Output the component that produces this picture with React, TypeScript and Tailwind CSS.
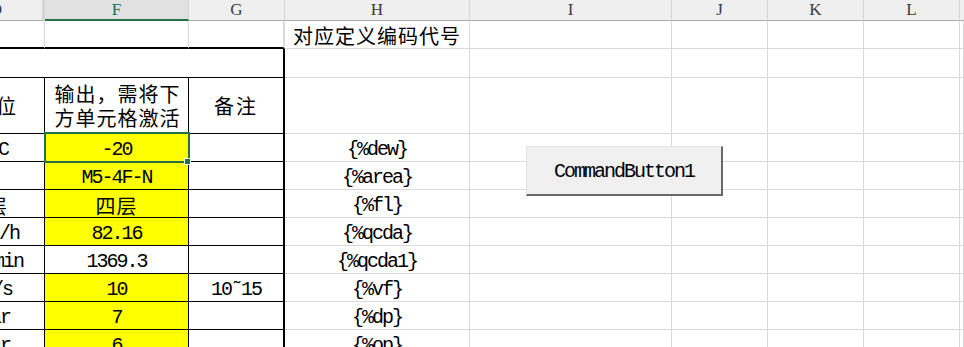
import React from 'react';

// 列幅（右罫線込み）
const W = ['w-[45px]', 'w-[144px]', 'w-[96px]', 'w-[185px]', 'w-[202px]', 'w-[96px]', 'w-[96px]', 'w-[96px]'];

const MONO = "font-['Liberation_Mono',monospace] text-[20px] tracking-[-2px]";
const CJK = "font-['Noto_Sans_CJK_SC',sans-serif] text-[20px] tracking-[1px]";

interface DataRow {
  e: string;
  eClass: string;
  f: string;
  fCjk?: boolean;
  yellow: boolean;
  g?: string;
  h: string;
}

const rows: DataRow[] = [
  { e: '°C', eClass: `mr-[36px] ${MONO}`, f: '-20', yellow: true, h: '{%dew}' },
  { e: '', eClass: '', f: 'M5-4F-N', yellow: true, h: '{%area}' },
  { e: '楼层', eClass: `mr-[36px] ${CJK}`, f: '四层', fCjk: true, yellow: true, h: '{%fl}' },
  { e: 'm³/h', eClass: `mr-[25px] ${MONO}`, f: '82.16', yellow: true, h: '{%qcda}' },
  { e: 'm³/min', eClass: `mr-[21px] ${MONO}`, f: '1369.3', yellow: false, h: '{%qcda1}' },
  { e: 'm/s', eClass: `mr-[32px] ${MONO}`, f: '10', yellow: true, g: '10˜15', h: '{%vf}' },
  { e: 'bar', eClass: `mr-[34px] ${MONO}`, f: '7', yellow: true, h: '{%dp}' },
  { e: 'bar', eClass: `mr-[34px] ${MONO}`, f: '6', yellow: true, h: '{%op}' },
];

const grid = 'shrink-0 h-full border-r border-b border-[#dadada]';

const GrayCells: React.FC<{ from: number; children?: React.ReactNode }> = ({ from, children }) => (
  <>
    {W.slice(from).map((w, i) => (
      <div key={w + i} className={`${grid} ${w} flex items-center justify-center pt-[4px]`}>
        {i === 0 ? children : null}
      </div>
    ))}
    <div className={`${grid} flex-1`} />
  </>
);

export default function App() {
  const headers = ['D', 'F', 'G', 'H', 'I', 'J', 'K', 'L'];

  return (
    <div className="relative w-[964px] h-[347px] overflow-hidden bg-white text-black">
      {/* 列見出し */}
      <div className="flex h-[21px] font-['Liberation_Serif',serif] text-[17px] text-[#3a3a3a]">
        {headers.map((h, i) =>
          i === 0 ? (
            <div key={h} className={`${W[0]} shrink-0 flex justify-end overflow-hidden bg-[#efefef] border-b border-[#ababab] border-r-[3px] border-r-[#d4d4d4]`}>
              <span className="mr-[40px] leading-[20px]">{h}</span>
            </div>
          ) : i === 1 ? (
            <div key={h} className={`${W[1]} shrink-0 flex justify-center bg-[#e1e1e1] border-b-2 border-[#217346] border-r border-r-[#d4d4d4] text-[#217346] leading-[20px]`}>
              {h}
            </div>
          ) : (
            <div key={h} className={`${W[i]} shrink-0 flex justify-center bg-[#efefef] border-b border-[#ababab] border-r border-r-[#d4d4d4] leading-[20px]`}>
              {h}
            </div>
          )
        )}
        <div className="flex-1 bg-[#efefef] border-b border-[#ababab]" />
      </div>

      {/* 1行目 */}
      <div className="flex h-[28px]">
        <div className={`${W[0]} shrink-0 h-full border-r border-[#dadada] border-b-2 border-b-black`} />
        <div className={`${W[1]} shrink-0 h-full border-r border-[#dadada] border-b-2 border-b-black`} />
        <div className={`${W[2]} shrink-0 h-full border-r-2 border-[#dadada] border-b-2 border-b-black`} />
        <div className={`${grid} ${W[3]} flex items-center justify-center pt-[2px] ${CJK} tracking-[1.5px]`}>
          对应定义编码代号
        </div>
        {W.slice(4).map((w, i) => (
          <div key={i} className={`${grid} ${w}`} />
        ))}
        <div className={`${grid} flex-1`} />
      </div>

      {/* 2行目（結合） */}
      <div className="flex h-[29px]">
        <div className="w-[285px] shrink-0 h-full border-r-2 border-b border-black" />
        <GrayCells from={3} />
      </div>

      {/* 3行目 見出し */}
      <div className="flex h-[56px]">
        <div className={`${W[0]} shrink-0 h-full flex items-center justify-end overflow-hidden border-r border-b border-black`}>
          <span className={`mr-[27px] whitespace-nowrap shrink-0 ${CJK}`}>单位</span>
        </div>
        <div className={`${W[1]} shrink-0 h-full flex items-center justify-center border-r border-b border-black`}>
          <div className={`${CJK} tracking-[1.5px] leading-[24px] text-center pl-[2px]`}>
            输出，需将下
            <br />
            方单元格激活
          </div>
        </div>
        <div className={`${W[2]} shrink-0 h-full flex items-center justify-center border-r-2 border-b border-black`}>
          <span className={`${CJK} tracking-[2px]`}>备注</span>
        </div>
        <GrayCells from={3} />
      </div>

      {/* データ行 */}
      {rows.map((r, idx) => (
        <div key={idx} className="flex h-[28px]">
          <div className={`${W[0]} shrink-0 h-full flex items-center justify-end overflow-hidden border-r border-b border-black pt-[4px]`}>
            {r.e && <span className={`whitespace-nowrap shrink-0 ${r.eClass}`}>{r.e}</span>}
          </div>
          <div
            className={`relative ${W[1]} shrink-0 h-full flex items-center justify-center border-r border-b border-black pt-[4px] ${
              r.yellow ? 'bg-[#ffff00]' : 'bg-white'
            }`}
          >
            <span className={r.fCjk ? CJK : MONO}>{r.f}</span>
            {idx === 0 && (
              <>
                <div className="absolute z-10 -left-px -top-[2px] w-[146px] h-[31px] border-2 border-[#217346]" />
                <div className="absolute z-10 left-[139px] top-[24px] w-[7px] h-[7px] bg-[#217346] border border-white" />
              </>
            )}
          </div>
          <div className={`${W[2]} shrink-0 h-full flex items-center justify-center border-r-2 border-b border-black pt-[4px]`}>
            {r.g && <span className={MONO}>{r.g}</span>}
          </div>
          <GrayCells from={3}>
            <span className={MONO}>{r.h}</span>
          </GrayCells>
        </div>
      ))}

      {/* フォーム コントロール */}
      <div className="absolute z-20 left-[526px] top-[146px] w-[197px] h-[50px] flex items-center justify-center bg-[#f0f0f0] border-t border-l border-[#e2e2e2] border-r-2 border-b-2 border-r-[#696969] border-b-[#696969]">
        <span className={`${MONO} pt-[2px]`}>CommandButton1</span>
      </div>
    </div>
  );
}
